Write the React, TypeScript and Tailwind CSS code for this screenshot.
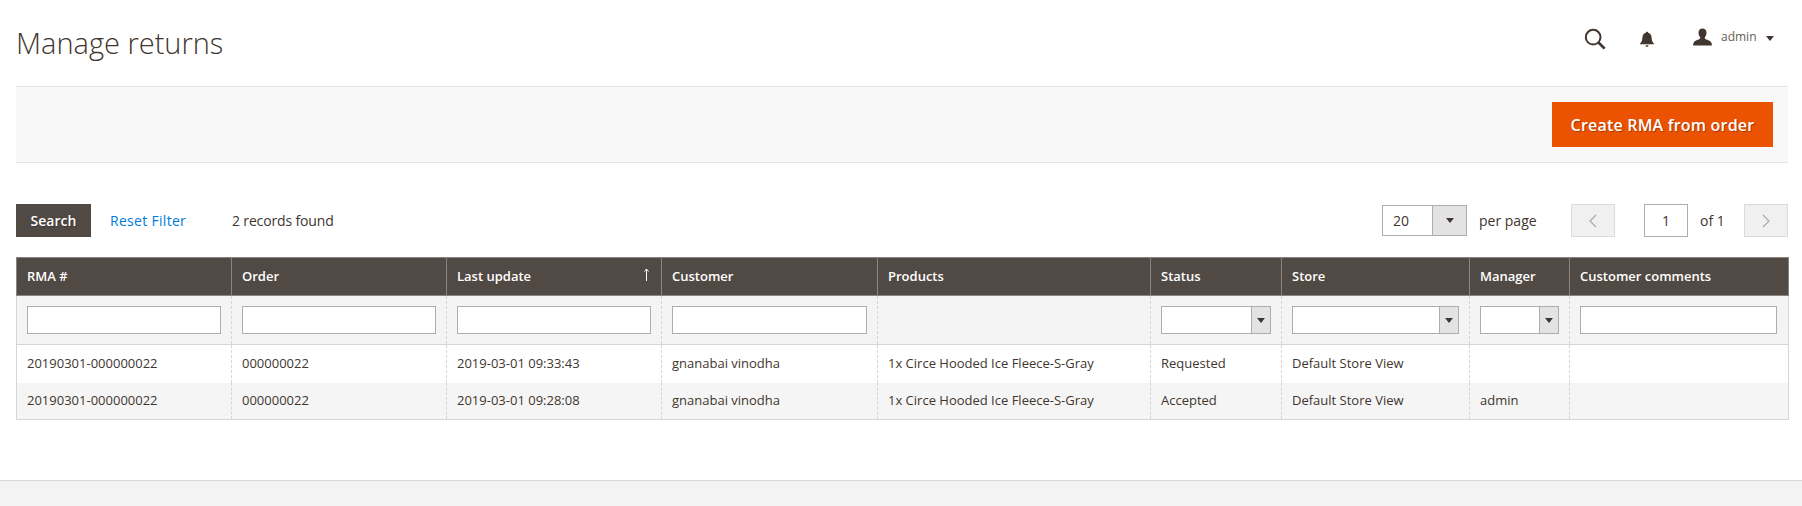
const columns = [
  { label: "RMA #", width: "w-[215px]" },
  { label: "Order", width: "w-[215px]" },
  { label: "Last update", width: "w-[215px]", sorted: true },
  { label: "Customer", width: "w-[216px]" },
  { label: "Products", width: "w-[273px]" },
  { label: "Status", width: "w-[131px]" },
  { label: "Store", width: "w-[188px]" },
  { label: "Manager", width: "w-[100px]" },
  { label: "Customer comments", width: "w-[219px]" },
];

const rows = [
  ["20190301-000000022", "000000022", "2019-03-01 09:33:43", "gnanabai vinodha", "1x Circe Hooded Ice Fleece-S-Gray", "Requested", "Default Store View", "", ""],
  ["20190301-000000022", "000000022", "2019-03-01 09:28:08", "gnanabai vinodha", "1x Circe Hooded Ice Fleece-S-Gray", "Accepted", "Default Store View", "admin", ""],
];

const filters = ["input", "input", "input", "input", "", "select", "select", "select", "input"];

function Caret() {
  return <span className="block h-0 w-0 border-x-[4px] border-t-[5px] border-x-transparent border-t-[#41362f]" />;
}

function FilterSelect() {
  return (
    <div className="flex h-[28px] w-full border border-[#adadad] bg-white">
      <div className="flex-1" />
      <div className="flex w-[19px] items-center justify-center border-l border-[#adadad] bg-[#e3e3e3]">
        <Caret />
      </div>
    </div>
  );
}

function Chevron({ left }: { left?: boolean }) {
  return (
    <svg width="10" height="14" viewBox="0 0 10 14" fill="none" stroke="#a9a9a9" strokeWidth="1.2">
      <path d={left ? "M8 1 2 7l6 6" : "M2 1l6 6-6 6"} />
    </svg>
  );
}

export default function App() {
  return (
    <div className="flex min-h-screen flex-col bg-white font-['Open_Sans',sans-serif] text-[13px] text-[#41362f]">
      {/* Page header */}
      <header className="flex h-[86px] items-center justify-between pl-4 pr-[28px]">
        <h1 className="mb-[2px] text-[29px] font-light leading-none">Manage returns</h1>
        <div className="flex items-center">
          <svg width="22" height="22" viewBox="0 0 24 24" fill="none" stroke="#41362f" className="mb-[8px] mr-[34px]">
            <circle cx="10" cy="10" r="8" strokeWidth="2.200" />
            <path d="M15.800 15.800 22.500 22.500" strokeWidth="3" />
          </svg>
          <svg width="14" height="17" viewBox="0 0 16 18" fill="#41362f" className="mb-[7px] mr-[39px]">
            <path d="M8 0c.8 0 1.300.5 1.400 1.300C12 2 13 4 13.200 6.500c.2 3 .6 5 2.800 7.300v.7H0v-.7c2.200-2.300 2.600-4.300 2.800-7.300C3 4 4 2 6.600 1.300 6.700.5 7.200 0 8 0Z" />
            <path d="M6.300 15.500h3.400C9.600 16.600 9 17.300 8 17.300s-1.600-.7-1.700-1.800Z" />
          </svg>
          <svg width="19" height="18" viewBox="0 0 20 18" fill="#41362f" className="mb-[12px] mr-[9px]">
            <path d="M10 0c2.800 0 4.200 1.900 4.200 4.500 0 1.800-.7 3.500-1.700 4.700-.3.400-.3 1 0 1.300.6.700 2 1.200 3.700 1.900 2.300.9 3.600 1.900 3.800 5.600H0c.2-3.700 1.500-4.700 3.800-5.600 1.700-.7 3.100-1.200 3.700-1.900.3-.3.3-.9 0-1.300-1-1.200-1.700-2.900-1.700-4.700C5.800 1.900 7.200 0 10 0Z" />
          </svg>
          <span className="mb-[12px] mr-[9px] w-[36px] text-[12px] text-[#676056]">admin</span>
          <span className="mb-[10px]">
            <Caret />
          </span>
        </div>
      </header>

      {/* Actions bar */}
      <div className="ml-4 mr-[14px] flex h-[77px] items-center justify-end border-y border-[#e3e3e3] bg-[#f8f8f8] pr-[15px]">
        <button className="h-[45px] w-[221px] bg-[#eb5202] text-[16px] font-semibold tracking-[0.2px] text-white [text-shadow:1px_1px_1px_rgba(0,0,0,0.3)]">
          Create RMA from order
        </button>
      </div>

      {/* Grid */}
      <main className="pl-4 pr-[14px] pt-[41px]">
        <div className="mb-[20px] flex h-[33px] items-center whitespace-nowrap">
          <button className="h-[33px] w-[75px] bg-[#514943] text-[14px] font-semibold text-white [text-shadow:1px_1px_1px_rgba(0,0,0,0.3)]">
            Search
          </button>
          <a className="ml-[19px] w-[75px] text-[14px] tracking-[0.3px] text-[#007bdb]">Reset Filter</a>
          <span className="ml-[47px] text-[14px] tracking-[-0.15px]">2 records found</span>
          <div className="ml-auto flex items-center">
            <div className="flex h-[31px] w-[85px] border border-[#adadad] bg-white">
              <span className="flex flex-1 items-center pl-[10px] text-[14px]">20</span>
              <div className="flex w-[34px] items-center justify-center border-l border-[#adadad] bg-[#e3e3e3]">
                <Caret />
              </div>
            </div>
            <span className="ml-[12px] w-[57px] text-[14px]">per page</span>
            <button className="ml-[35px] flex h-[33px] w-[44px] items-center justify-center border border-[#dadada] bg-[#f0f0f0]">
              <Chevron left />
            </button>
            <div className="ml-[29px] flex h-[33px] w-[44px] items-center justify-center border border-[#adadad] bg-white text-[14px]">
              1
            </div>
            <span className="ml-[12px] w-[32px] text-[14px]">of 1</span>
            <button className="ml-[12px] flex h-[33px] w-[44px] items-center justify-center border border-[#dadada] bg-[#f0f0f0]">
              <Chevron />
            </button>
          </div>
        </div>

        <table className="w-full table-fixed border-collapse border border-[#d6d6d6]">
          <colgroup>
            {columns.map((c) => (
              <col key={c.label} className={c.width} />
            ))}
          </colgroup>
          <thead>
            <tr className="h-[38px] bg-[#514943]">
              {columns.map((c) => (
                <th
                  key={c.label}
                  className="relative border border-[#8a837f] px-[10px] text-left text-[13px] font-semibold text-white"
                >
                  {c.label}
                  {c.sorted && (
                    <svg width="7" height="13" viewBox="0 0 7 13" fill="none" stroke="#fff" className="absolute right-[11px] top-[10px]">
                      <path d="M3.500 13V1M1.500 3.500l2-2.500 2 2.500" strokeWidth="1" />
                    </svg>
                  )}
                </th>
              ))}
            </tr>
          </thead>
          <tbody>
            <tr className="h-[49px] bg-[#f4f4f4]">
              {filters.map((f, i) => (
                <td key={i} className="border-x border-b border-x-[#d6d6d6] border-b-[#d6d6d6] border-dashed [border-bottom-style:solid] px-[10px] align-middle last:pr-[11px]">
                  {f === "input" && <input className="block h-[28px] w-full border border-[#adadad] bg-white" />}
                  {f === "select" && <FilterSelect />}
                </td>
              ))}
            </tr>
            {rows.map((row, r) => (
              <tr key={r} className={r % 2 === 0 ? "h-[38px] bg-white" : "h-[37px] bg-[#f5f5f5]"}>
                {row.map((cell, i) => (
                  <td key={i} className="border-x border-dashed border-[#d6d6d6] px-[10px] align-middle">
                    {cell}
                  </td>
                ))}
              </tr>
            ))}
          </tbody>
        </table>
      </main>

      <footer className="mt-auto h-[26px] border-t border-[#d8d8d8] bg-[#f3f3f3]" />
    </div>
  );
}
